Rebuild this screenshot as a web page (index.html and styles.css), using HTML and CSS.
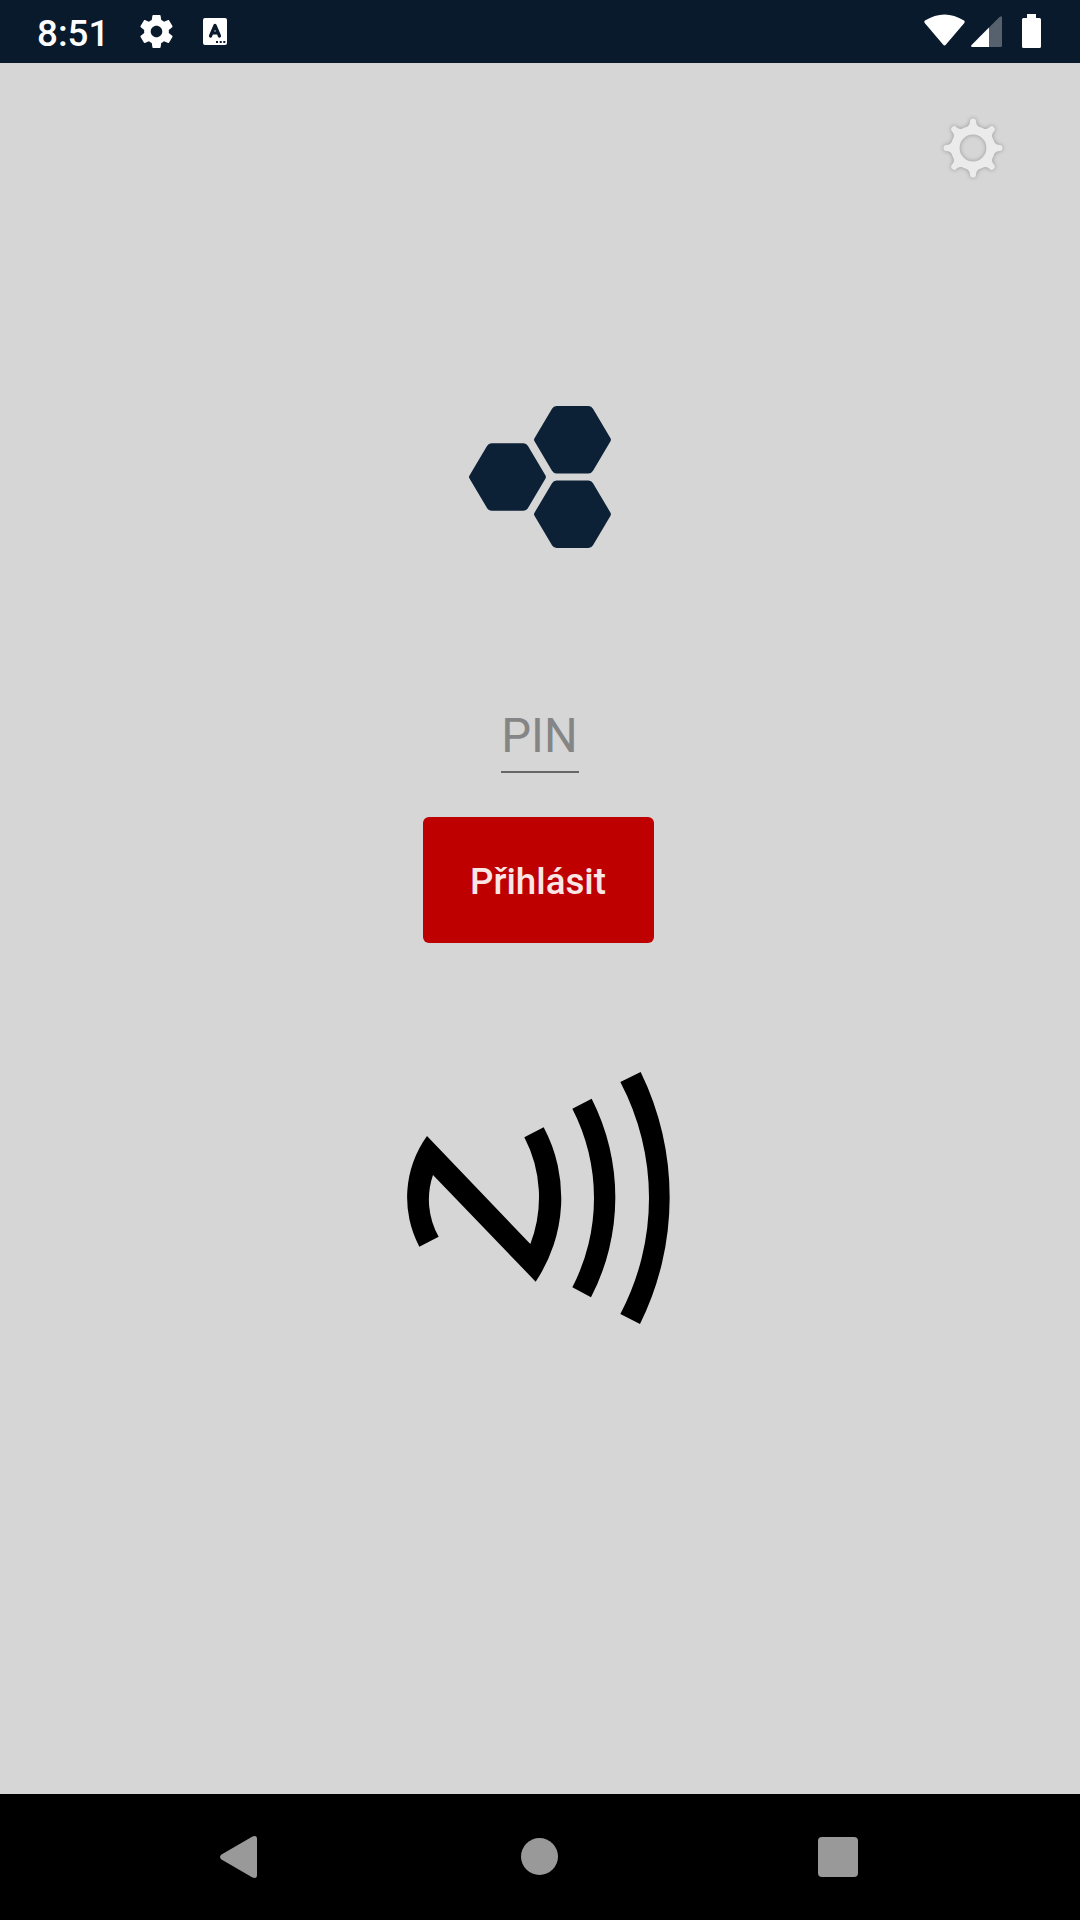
FILE: index.html
```html
<!DOCTYPE html>
<html lang="cs">
<head>
  <meta charset="utf-8">
  <title>Přihlášení</title>
  <link rel="stylesheet" href="styles.css">
</head>
<body>
  <header class="status-bar">
    <div class="status-left">
      <span class="clock">8:51</span>
      <svg class="status-gear" viewBox="2 2 20 20">
        <path fill="#fff" d="M19.43 12.98c.04-.32.07-.64.07-.98s-.03-.66-.07-.98l2.11-1.65c.19-.15.24-.42.12-.64l-2-3.46c-.12-.22-.39-.3-.61-.22l-2.49 1c-.52-.4-1.08-.73-1.69-.98l-.38-2.65C14.46 2.18 14.25 2 14 2h-4c-.25 0-.46.18-.49.42l-.38 2.65c-.61.25-1.17.59-1.69.98l-2.49-1c-.23-.09-.49 0-.61.22l-2 3.46c-.13.22-.07.49.12.64l2.11 1.65c-.04.32-.07.65-.07.98s.03.66.07.98l-2.11 1.65c-.19.15-.24.42-.12.64l2 3.46c.12.22.39.3.61.22l2.49-1c.52.4 1.08.73 1.69.98l.38 2.65c.03.24.24.42.49.42h4c.25 0 .46-.18.49-.42l.38-2.65c.61-.25 1.17-.59 1.69-.98l2.49 1c.23.09.49 0 .61-.22l2-3.46c.12-.22.07-.49-.12-.64l-2.11-1.65zM12 15.5c-1.93 0-3.5-1.57-3.5-3.5s1.57-3.5 3.5-3.5 3.5 1.57 3.5 3.5-1.57 3.5-3.5 3.5z"/>
      </svg>
      <svg class="status-keyboard" viewBox="0 0 24 27">
        <rect width="24" height="27" rx="2" fill="#fff"/>
        <path d="M7.5 18L12 7.5l4.500 10.500M9 15h6" fill="none" stroke="#081a2b" stroke-width="3.2" stroke-linecap="round" stroke-linejoin="round"/>
        <path d="M13 23h2v2h-2zM16.700 23h2v2h-2zM20.300 23h2v2h-2z" fill="#081a2b"/>
      </svg>
    </div>
    <div class="status-right">
      <svg class="wifi" viewBox="0 0 41 32">
        <path d="M1 6.500Q20.500-5.500 40 6.500 41.200 7.500 40.300 9L22 30.500Q20.500 32.500 19 30.500L.7 9Q-.2 7.500 1 6.500z" fill="#fff"/>
      </svg>
      <svg class="signal" viewBox="0 0 31 31">
        <path d="M18 11.500L28.500 1Q31-1 31 2v27.500Q31 31 29.500 31H18z" fill="#56616d"/>
        <path d="M18 11.500V31H1.500Q-1 31 .8 28.700z" fill="#fff"/>
      </svg>
      <svg class="battery" viewBox="0 0 19 34">
        <path d="M5 0h9v4h3.500Q19 4 19 5.500v27q0 1.500-1.500 1.500h-16Q0 34 0 32.500v-27Q0 4 1.500 4H5z" fill="#fff"/>
      </svg>
    </div>
  </header>

  <main class="login">
    <svg class="settings" viewBox="-36 -36 72 72">
      <defs>
        <g id="cog">
          <circle r="17.700" fill="none" stroke-width="8.600"/>
          <g stroke="none">
            <path id="tooth" d="M-8-20Q-3.800-22-3.300-25L-2.800-28Q-2.300-29.500 0-29.500T2.800-28L3.300-25Q3.800-22 8-20z"/>
            <use href="#tooth" transform="rotate(45)"/>
            <use href="#tooth" transform="rotate(90)"/>
            <use href="#tooth" transform="rotate(135)"/>
            <use href="#tooth" transform="rotate(180)"/>
            <use href="#tooth" transform="rotate(225)"/>
            <use href="#tooth" transform="rotate(270)"/>
            <use href="#tooth" transform="rotate(315)"/>
          </g>
        </g>
      </defs>
      <use href="#cog" class="cog"/>
    </svg>

    <svg class="logo" viewBox="0 0 142 142">
      <g fill="#0c2036">
        <path id="hex" d="M.5 72.500Q-.5 71 .5 69.500L18 40Q19.500 37.300 22.500 37.300H54.500Q57.500 37.300 59 40L76.500 69.500Q77.300 71 76.500 72.500L59 102Q57.500 104.700 54.500 104.700H22.500Q19.500 104.700 18 102z"/>
        <use href="#hex" x="65" y="-37.200"/>
        <use href="#hex" x="65" y="37.200"/>
      </g>
    </svg>

    <form class="login-form">
      <input type="text" class="pin" placeholder="PIN">
      <button type="button" class="submit">Přihlásit</button>
    </form>

    <svg class="nfc" viewBox="51 36 789 756">
      <path d="M111 228L421 552A390 390 0 0 0 403 232L461 202A450 450 0 0 1 437 665L129 345A226 226 0 0 0 146 530L88 560A315 315 0 0 1 111 228z"/>
      <path d="M605 116A653 653 0 0 1 603 712L547 682A585 585 0 0 0 547 146z"/>
      <path d="M752 36A856 856 0 0 1 750 792L691 762A747 747 0 0 0 691 66z"/>
    </svg>
  </main>

  <nav class="nav-bar">
    <svg class="nav-back" viewBox="0 0 37 42">
      <path d="M32.500.5Q37-1.200 37 3v36q0 4.200-4.500 2.500L1.500 23.500Q-1.500 21 1.500 18.500z" fill="#999"/>
    </svg>
    <div class="nav-home"></div>
    <div class="nav-recent"></div>
  </nav>
</body>
</html>
```
FILE: styles.css
```css
* {
  box-sizing: border-box;
}

body {
  display: flex;
  flex-direction: column;
  height: 1920px;
  margin: 0;
  background-color: #d6d6d6;
  font-family: Roboto, sans-serif;
}

svg {
  display: block;
}

.status-bar {
  display: flex;
  justify-content: space-between;
  height: 63px;
  padding: 0 39px 0 37px;
  background-color: #081a2b;
}

.status-left,
.status-right {
  display: flex;
  align-items: center;
}

.clock {
  width: 103px;
  color: #fff;
  font-size: 36.75px;
  font-weight: 500;
  line-height: 43px;
  padding-top: 4px;
}

.status-gear {
  width: 33px;
  height: 33px;
}

.status-keyboard {
  width: 24px;
  height: 27px;
  margin-left: 30px;
}

.wifi {
  width: 41px;
  height: 32px;
  margin-bottom: 3px;
}

.signal {
  width: 31px;
  height: 31px;
  margin-left: 6px;
}

.battery {
  width: 19px;
  height: 34px;
  margin: 0 0 1px 20px;
}

.login {
  display: flex;
  flex: 1;
  flex-direction: column;
  align-items: center;
  padding-top: 49px;
}

.settings {
  align-self: flex-end;
  width: 72px;
  height: 72px;
  margin-right: 71px;
}

.cog {
  fill: #ebebeb;
  stroke: #ebebeb;
  filter: drop-shadow(0 0 2px rgba(0, 0, 0, 0.3));
}

.logo {
  width: 142px;
  height: 142px;
  margin-top: 222px;
}

.login-form {
  display: flex;
  flex-direction: column;
  align-items: center;
  margin-top: 152px;
}

.pin {
  width: 78px;
  height: 73px;
  padding: 1px 1px 0 0;
  border: none;
  border-bottom: 2px solid #666;
  background: none;
  font-family: inherit;
  font-size: 47.25px;
  text-align: center;
  outline: none;
}

.pin::placeholder {
  color: #858585;
}

.submit {
  width: 231px;
  height: 126px;
  margin: 44px 3px 0 0;
  padding: 3px 1px 0 0;
  border: none;
  border-radius: 6px;
  background-color: #be0000;
  color: #fbe6e6;
  font-family: inherit;
  font-size: 36.75px;
  font-weight: 500;
}

.nfc {
  width: 263px;
  height: 252px;
  margin: 129px 3px 0 0;
}

.nav-bar {
  display: flex;
  align-items: center;
  height: 126px;
  padding-left: 220px;
  background-color: #000;
}

.nav-back {
  width: 37px;
  height: 42px;
}

.nav-home {
  width: 37px;
  height: 37px;
  margin: 0 0 1px 264px;
  border-radius: 50%;
  background-color: #999;
}

.nav-recent {
  width: 40px;
  height: 40px;
  margin-left: 260px;
  border-radius: 4px;
  background-color: #999;
}
```
